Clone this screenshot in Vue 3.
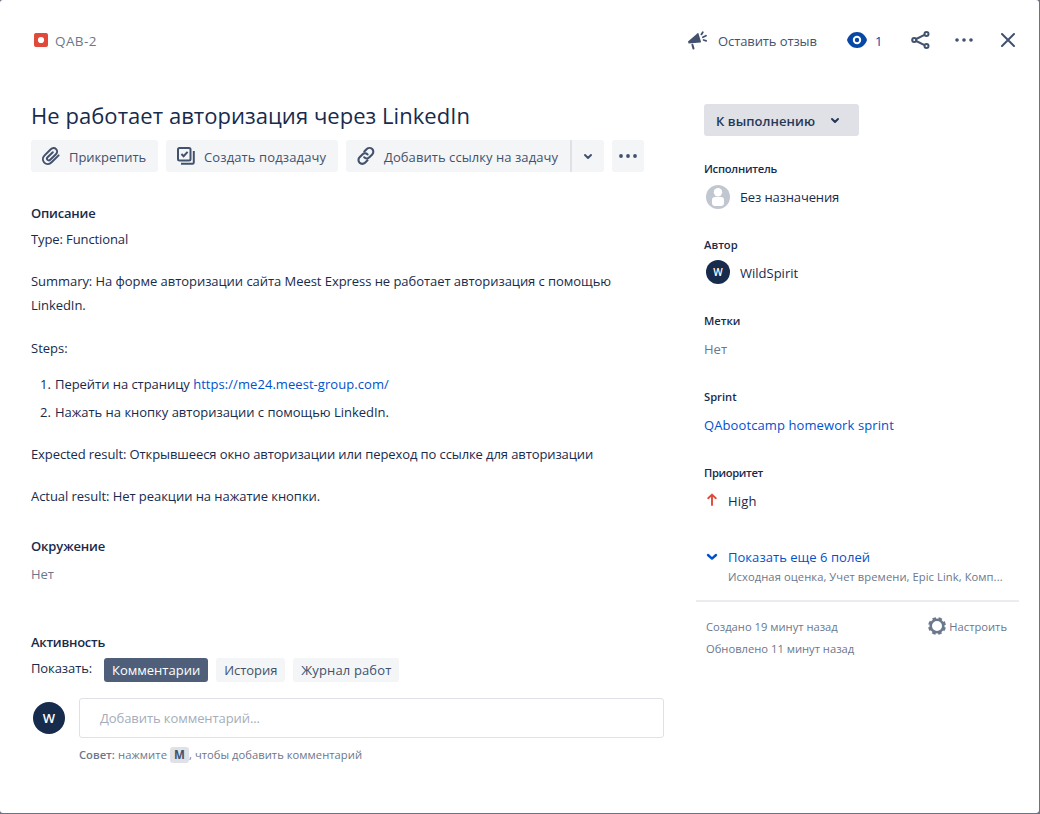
<script setup>
const tabs = [
  { label: 'Комментарии', cls: 'on' },
  { label: 'История', cls: '' },
  { label: 'Журнал работ', cls: 'wide' },
]
</script>

<template>
  <div class="modal">
    <header class="top">
      <div class="crumb">
        <svg width="14" height="14" viewBox="0 0 14 14"><rect width="14" height="14" rx="2" fill="#e04a3a" /><circle cx="7" cy="7" r="3.1" fill="#fff" /></svg>
        <span class="key">QAB-2</span>
      </div>
      <div class="tools">
        <svg class="horn" width="22" height="22" viewBox="0 0 22 22">
          <path d="M1 12.400 10.600 4.200Q11.200 3.900 11.500 4.500L14 12.800Q14 13.500 13.400 13.600L1.600 14.400Z" fill="#42526e" />
          <path d="M5.400 15.800 6.500 19.600" stroke="#42526e" stroke-width="2" stroke-linecap="round" />
          <path d="M14.400 5.400 15.800 3.200M15.800 8.200 19 6.700M16.600 11 19.200 11.800" stroke="#42526e" stroke-width="1.800" stroke-linecap="round" fill="none" />
        </svg>
        <span class="feedback">Оставить отзыв</span>
        <svg class="eye" width="20" height="16" viewBox="0 0 20 16">
          <path d="M10 0C5 0 1.600 3.400 0 8c1.600 4.600 5 8 10 8s8.400-3.400 10-8C18.400 3.400 15 0 10 0Z" fill="#0747a6" />
          <circle cx="10" cy="8" r="3.200" fill="none" stroke="#fff" stroke-width="2" />
        </svg>
        <span class="count">1</span>
        <svg class="share" width="20" height="20" viewBox="0 0 20 20" fill="none" stroke="#42526e" stroke-width="2">
          <circle cx="3.200" cy="10" r="2" /><circle cx="15.500" cy="4" r="2" /><circle cx="15.500" cy="16" r="2" />
          <path d="M5.200 9 13.500 4.900M5.200 11 13.500 15.100" />
        </svg>
        <svg class="more" width="18" height="4" viewBox="0 0 18 4" fill="#42526e"><circle cx="2" cy="2" r="1.800" /><circle cx="9" cy="2" r="1.800" /><circle cx="16" cy="2" r="1.800" /></svg>
        <svg class="close" width="14" height="14" viewBox="0 0 14 14" stroke="#42526e" stroke-width="2" stroke-linecap="round"><path d="M1 1 13 13M13 1 1 13" /></svg>
      </div>
    </header>

    <div class="body">
      <main class="main">
        <h1>Не работает авторизация через LinkedIn</h1>
        <div class="actions">
          <button class="btn attach">
            <svg width="20" height="20" viewBox="0 0 20 20" fill="none" stroke="#42526e" stroke-width="2" stroke-linecap="round">
              <path d="M17.600 9.400 10.600 16.300C8.500 18.400 5.300 18.500 3.300 16.600 1.400 14.700 1.500 11.500 3.600 9.400L9.800 3.300C11.300 1.800 13.700 1.700 15.100 3.100 16.500 4.500 16.400 6.700 14.900 8.200L9.200 13.800C8.400 14.600 7.200 14.600 6.500 13.900 5.800 13.200 5.800 12.100 6.600 11.300L11.800 6.200" />
            </svg>
            <span>Прикрепить</span>
          </button>
          <button class="btn sub">
            <svg width="20" height="20" viewBox="0 0 20 20" fill="none" stroke="#42526e" stroke-width="2">
              <rect x="2" y="2" width="12.500" height="12.500" rx="1.500" />
              <path d="M5.400 8 7.600 10.200 11.600 5.800" />
              <path d="M17.800 5V16.500Q17.800 17.800 16.500 17.800H5" />
            </svg>
            <span>Создать подзадачу</span>
          </button>
          <div class="split">
            <button class="btn link">
              <svg width="20" height="20" viewBox="0 0 20 20" fill="none" stroke="#42526e" stroke-width="2.100" stroke-linecap="round">
                <path d="M8.300 5.600 10.800 3.100C12.300 1.600 14.700 1.600 16.200 3.100 17.700 4.600 17.700 7 16.200 8.500L13.400 11.300C11.900 12.800 9.600 12.700 8.200 11.300" />
                <path d="M11.500 14.200 9 16.700C7.500 18.200 5.100 18.200 3.600 16.700 2.100 15.200 2.100 12.800 3.600 11.300L6.400 8.500C7.900 7 10.200 7.100 11.600 8.500" />
              </svg>
              <span>Добавить ссылку на задачу</span>
            </button>
            <button class="btn arrow">
              <svg width="10" height="7" viewBox="0 0 10 7" fill="none" stroke="#42526e" stroke-width="2" stroke-linecap="round" stroke-linejoin="round"><path d="M2 2 5 5 8 2" /></svg>
            </button>
          </div>
          <button class="btn dots">
            <svg width="18" height="4" viewBox="0 0 18 4" fill="#42526e"><circle cx="2" cy="2" r="1.900" /><circle cx="9" cy="2" r="1.900" /><circle cx="16" cy="2" r="1.900" /></svg>
          </button>
        </div>

        <h2 class="h-desc">Описание</h2>
        <div class="desc">
          <p class="type">Type: Functional</p>
          <p class="summary">Summary: На форме авторизации сайта Meest Express не работает авторизация с помощью <br />LinkedIn.</p>
          <p class="steps">Steps:</p>
          <ol>
            <li><b class="num">1.</b><span class="go">Перейти на страницу&nbsp;</span><a>https://me24.meest-group.com/</a></li>
            <li><b class="num">2.</b><span class="press-auth">Нажать на кнопку авторизации с помощью LinkedIn.</span></li>
          </ol>
          <p class="expected">Expected result: Открывшееся окно авторизации или переход по ссылке для авторизации</p>
          <p class="actual">Actual result: Нет реакции на нажатие кнопки.</p>
        </div>

        <h2 class="h-env">Окружение</h2>
        <p class="none">Нет</p>

        <h2 class="h-act">Активность</h2>
        <div class="show">
          <span class="lbl">Показать:</span>
          <button v-for="t in tabs" :key="t.label" class="tab" :class="t.cls">{{ t.label }}</button>
        </div>
        <div class="comment">
          <div class="ava big">W</div>
          <div class="field-col">
            <div class="input">Добавить комментарий...</div>
            <div class="hint"><strong>Совет:</strong><span class="press">нажмите</span><kbd>M</kbd><span class="rest">, чтобы добавить комментарий</span></div>
          </div>
        </div>
      </main>

      <aside class="side">
        <button class="status">
          <span>К выполнению</span>
          <svg width="10" height="7" viewBox="0 0 10 7" fill="none" stroke="#253858" stroke-width="2" stroke-linecap="round" stroke-linejoin="round"><path d="M2 2 5 5 8 2" /></svg>
        </button>

        <section class="field">
          <h3 class="l-assignee">Исполнитель</h3>
          <div class="val person">
            <svg width="24" height="24" viewBox="0 0 24 24"><circle cx="12" cy="12" r="12" fill="#c1c7d0" /><circle cx="12" cy="7.200" r="4.200" fill="#fff" /><rect x="6" y="12" width="12" height="9" rx="3" fill="#fff" /></svg>
            <span class="tight">Без назначения</span>
          </div>
        </section>
        <section class="field">
          <h3>Автор</h3>
          <div class="val person"><div class="ava small">W</div><span>WildSpirit</span></div>
        </section>
        <section class="field">
          <h3>Метки</h3>
          <div class="val muted">Нет</div>
        </section>
        <section class="field">
          <h3>Sprint</h3>
          <div class="val blue">QAbootcamp homework sprint</div>
        </section>
        <section class="field">
          <h3 class="l-prio">Приоритет</h3>
          <div class="val prio">
            <svg width="16" height="16" viewBox="0 0 16 16" fill="none" stroke="#e04a3a" stroke-width="1.900" stroke-linecap="round" stroke-linejoin="round"><path d="M8 13V3M4.200 6.200 8 2.600 11.800 6.200" /></svg>
            <span>High</span>
          </div>
        </section>

        <div class="showmore">
          <svg width="12" height="8" viewBox="0 0 12 8" fill="none" stroke="#0052cc" stroke-width="2.400" stroke-linecap="round" stroke-linejoin="round"><path d="M2 2 6 5.600 10 2" /></svg>
          <div>
            <div class="m1">Показать еще 6 полей</div>
            <div class="m2">Исходная оценка, Учет времени, Epic Link, Комп...</div>
          </div>
        </div>
        <div class="foot">
          <div class="dates"><div>Создано 19 минут назад</div><div>Обновлено 11 минут назад</div></div>
          <div class="config">
            <svg width="18" height="18" viewBox="0 0 18 18" fill="none" stroke="#6b778c">
              <circle cx="9" cy="9" r="6.300" stroke-width="2.600" />
              <circle cx="9" cy="9" r="7.900" stroke-width="2" stroke-dasharray="3.600 2.605" stroke-dashoffset="-1.300" />
            </svg>
            <span>Настроить</span>
          </div>
        </div>
      </aside>
    </div>
  </div>
</template>

<style>
body { margin: 0; background: #6b7280; }
</style>

<style scoped>
* { box-sizing: border-box; }
.modal {
  width: 1039px; height: 813px; background: #fff; border-radius: 3px; overflow: hidden;
  font: 13px/24px "Open Sans", "Noto Sans", sans-serif; color: #172b4d;
}
h1, h2, h3, p, ol { margin: 0; padding: 0; }
svg { display: block; flex: none; }
button { border: 0; margin: 0; padding: 0; font: inherit; color: inherit; display: flex; align-items: center; white-space: nowrap; }
.top { height: 80px; padding: 0 24px 0 34px; display: flex; justify-content: space-between; align-items: center; }
.crumb { display: flex; align-items: center; gap: 7px; color: #6b778c; }
.key { font-size: 13.500px; letter-spacing: .4px; padding-top: 2px; }
.tools { display: flex; align-items: center; color: #42526e; }
.feedback { width: 99px; margin-left: 9px; letter-spacing: -.1px; padding-top: 2px; white-space: nowrap; }
.eye { margin-left: 30px; }
.count { width: 7px; margin-left: 8px; padding-top: 2px; color: #0747a6; }
.share { margin-left: 29px; }
.more { margin-left: 24px; }
.close { margin-left: 28px; }
.body { display: flex; }
.main { width: 633px; margin-left: 31px; padding-top: 21px; }
h1 { font-size: 22px; font-weight: 400; line-height: 28px; letter-spacing: .05px; white-space: nowrap; }
.actions { display: flex; gap: 8px; margin-top: 11px; height: 32px; color: #42526e; }
.btn { height: 32px; background: #f4f5f7; border-radius: 3px; }
.btn span { padding-top: 2px; }
.attach { width: 127px; padding-left: 10px; gap: 8px; letter-spacing: -.07px; }
.sub { width: 172px; padding-left: 10px; gap: 8px; letter-spacing: .12px; }
.split { display: flex; }
.link { width: 224px; padding-left: 10px; gap: 8px; border-radius: 3px 0 0 3px; letter-spacing: .06px; }
.arrow { width: 34px; border-left: 2px solid #dfe1e6; border-radius: 0 3px 3px 0; justify-content: center; }
.dots { width: 32px; justify-content: center; }
h2 { font-size: 13px; font-weight: 600; line-height: 20px; letter-spacing: -.13px; }
.h-desc { margin-top: 31px; letter-spacing: -.2px; }
.desc { padding-top: 4px; }
.desc p { white-space: nowrap; }
.type { letter-spacing: -.11px; }
.summary { margin-top: 18px; letter-spacing: -.05px; }
.steps { margin-top: 19px; }
ol { list-style: none; margin-top: 12px; display: flex; flex-direction: column; gap: 4px; }
li { display: flex; }
.num { width: 24px; padding-left: 9px; font-weight: 400; }
.go { letter-spacing: -.04px; }
.press-auth { letter-spacing: -.02px; }
a { color: #0052cc; letter-spacing: .06px; }
.expected { margin-top: 18px; letter-spacing: -.1px; }
.actual { margin-top: 18px; letter-spacing: -.05px; }
.h-env { margin-top: 28px; }
.none { margin-top: 6px; color: #6b778c; letter-spacing: -.1px; }
.h-act { margin-top: 46px; letter-spacing: -.26px; }
.show { display: flex; margin-top: 6px; height: 24px; }
.lbl { width: 73px; letter-spacing: -.1px; line-height: 21px; }
.tab { height: 24px; padding: 0 8px; margin-right: 8px; border-radius: 3px; background: #f4f5f7; color: #42526e; letter-spacing: -.05px; }
.tab.on { background: #505f79; color: #fff; letter-spacing: 0; }
.tab.wide { letter-spacing: .13px; }
.comment { display: flex; margin-top: 16px; padding-left: 2px; }
.ava { background: #172b4d; color: #fff; border-radius: 50%; display: flex; align-items: center; justify-content: center; font-weight: 600; flex: none; }
.big { width: 32px; height: 32px; margin-top: 4px; font-size: 13px; }
.small { width: 24px; height: 24px; margin-top: -1px; font-size: 10px; }
.field-col { margin-left: 14px; }
.input { width: 585px; height: 40px; border: 1px solid #dfe1e6; border-radius: 3px; padding-left: 20px; line-height: 38px; color: #a5adba; letter-spacing: -.08px; }
.hint { display: flex; align-items: center; margin-top: 9px; height: 16px; font-size: 11.200px; line-height: 16px; color: #6b778c; white-space: nowrap; }
.hint strong { width: 39px; font-weight: 600; }
.press { width: 52px; letter-spacing: .1px; }
.rest { letter-spacing: .04px; }
kbd { width: 19px; height: 16px; border-radius: 3px; background: #dfe1e6; color: #42526e; text-align: center; font: 700 11.500px/16px "Open Sans", sans-serif; }
.side { width: 323px; margin-left: 32px; padding-top: 24px; }
.status { width: 155px; height: 32px; margin: 0 0 25px 8px; padding-left: 12px; background: #dfe1e6; border-radius: 3px; font-weight: 600; gap: 15px; color: #253858; letter-spacing: .06px; }
.status span { padding-top: 2px; }
.field { height: 76px; padding-left: 8px; }
h3 { font-size: 11.200px; font-weight: 600; line-height: 16px; }
.l-assignee { letter-spacing: -.25px; }
.l-prio { letter-spacing: -.35px; }
.val { height: 24px; margin-top: 8px; white-space: nowrap; }
.person { display: flex; padding-left: 2px; gap: 10px; }
.tight { letter-spacing: -.13px; }
.muted { color: #6b778c; }
.blue { color: #0052cc; letter-spacing: .1px; }
.prio { display: flex; gap: 8px; letter-spacing: .2px; }
.prio svg { margin-top: 3px; }
.showmore { display: flex; height: 60px; margin-top: 1px; padding-left: 10px; gap: 10px; border-bottom: 2px solid #ebecf0; white-space: nowrap; }
.showmore svg { margin-top: 11px; }
.m1 { color: #0052cc; line-height: 24px; padding-top: 3px; letter-spacing: .04px; }
.m2 { color: #6b778c; font-size: 11.200px; line-height: 16px; letter-spacing: .07px; }
.foot { display: flex; justify-content: space-between; padding: 14px 12px 0 10px; font-size: 11.200px; line-height: 22px; color: #6b778c; white-space: nowrap; }
.config { display: flex; gap: 3px; height: 22px; }
.config svg { margin-top: 1px; }
</style>
